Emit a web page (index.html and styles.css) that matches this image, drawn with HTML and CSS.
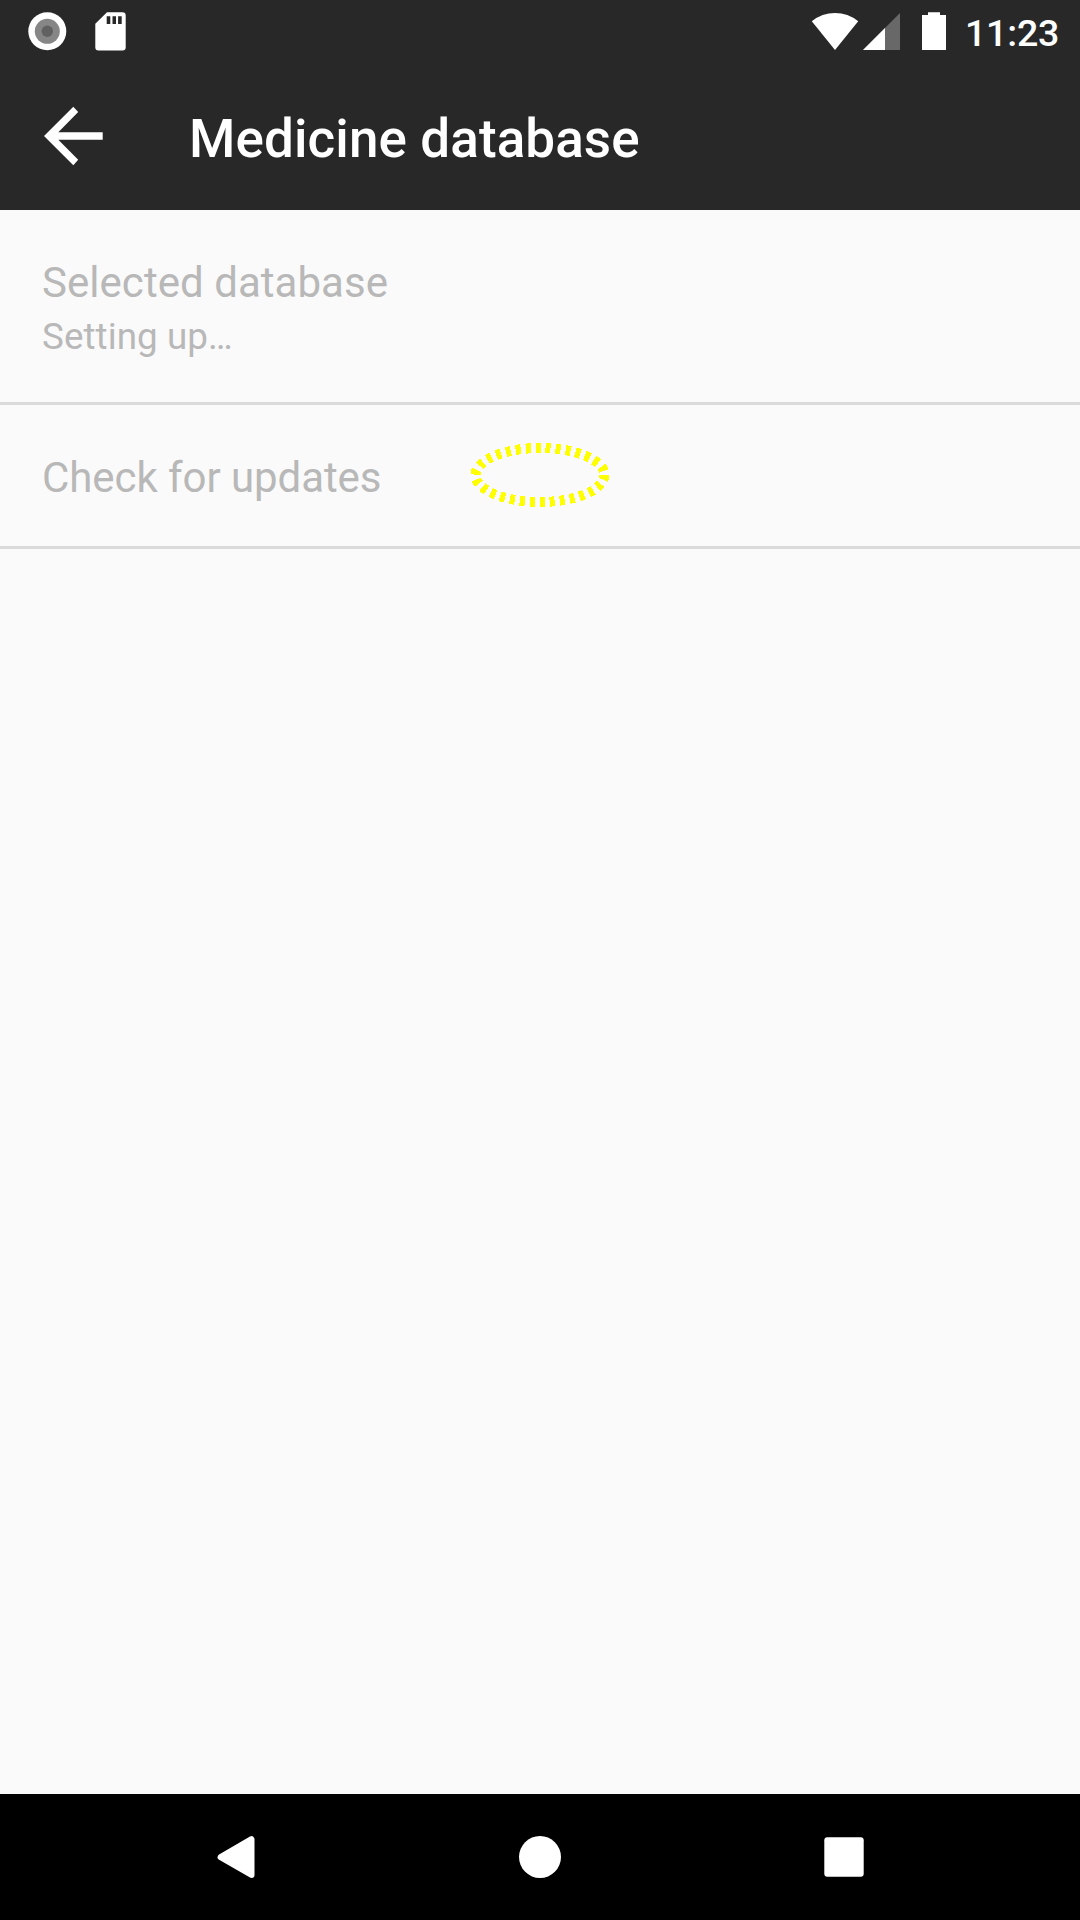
FILE: index.html
```html
<!DOCTYPE html>
<html lang="en">
<head>
<meta charset="utf-8">
<title>Medicine database</title>
<link rel="stylesheet" href="styles.css">
</head>
<body>
<div class="screen">
  <div class="status-bar">
    <svg class="status-icons" width="180" height="63" viewBox="0 0 180 63" aria-hidden="true">
      <circle cx="47.3" cy="31.3" r="19" fill="#fff"/>
      <circle cx="47.3" cy="31.3" r="12.5" fill="#868686"/>
      <circle cx="47.3" cy="31.3" r="5.7" fill="#616161"/>
      <path fill="#fff" fill-rule="evenodd" d="M107 12.3H122.5Q125.7 12.3 125.7 15.5V47.5Q125.7 50.5 122.5 50.5H98.5Q95.3 50.5 95.3 47.5V23.7ZM106.7 16.2V24H110.3V16.2ZM112.5 16.2V24H116V16.2ZM118.1 16.2V24H121.7V16.2Z"/>
    </svg>
    <div class="status-right">
      <svg width="150" height="63" viewBox="800 0 150 63" aria-hidden="true">
        <path fill="#fff" d="M811.8 21.2Q822 13 835 13T858.2 21.2L835 50Z"/>
        <path fill="#686868" d="M900 13V50H863Z"/>
        <path fill="#fff" d="M885 28V50H863Z"/>
        <path fill="#fff" d="M928 12.2H940V15H946V50H922V15H928Z"/>
      </svg>
      <span class="clock">11:23</span>
    </div>
  </div>
  <header class="app-bar">
    <svg class="back" width="59" height="60" viewBox="0 -0.5 59 60" aria-label="Back">
      <path fill="#fff" d="M58.7 25.8V33.3H14.3L34.2 53.2L29.3 58.8L0 29.5L29.3.2L34.2 5.5L14.3 25.8Z"/>
    </svg>
    <h1 class="title">Medicine database</h1>
  </header>
  <main class="content">
    <div class="row row-tall">
      <div class="label">Selected database</div>
      <div class="summary">Setting up…</div>
    </div>
    <div class="row row-short">
      <div class="label label-tight">Check for updates</div>
      <svg class="highlight" width="140" height="66" viewBox="0 0 140 66" shape-rendering="crispEdges" aria-hidden="true">
        <ellipse cx="70" cy="33" rx="64.5" ry="27" fill="none" stroke="#ff0" stroke-width="10" stroke-dasharray="5 5"/>
      </svg>
    </div>
  </main>
  <nav class="nav-bar">
    <svg width="1080" height="126" viewBox="0 0 1080 126" aria-hidden="true">
      <path fill="#fff" stroke="#fff" stroke-width="6" stroke-linejoin="round" d="M220.6 63.2L251.5 45.2V81Z"/>
      <circle cx="540" cy="63" r="21" fill="#fff"/>
      <rect x="824.3" y="43.3" width="39.4" height="39.4" rx="3" fill="#fff"/>
    </svg>
  </nav>
</div>
</body>
</html>
```
FILE: styles.css
```css
body {
  margin: 0;
  font-family: Roboto, "Noto Sans", sans-serif;
  background: #fafafa;
}

svg {
  display: block;
}

.screen {
  display: flex;
  flex-direction: column;
  height: 1920px;
  overflow: hidden;
}

.status-bar {
  display: flex;
  justify-content: space-between;
  height: 63px;
  background: #282828;
}

.status-right {
  display: flex;
  width: 280px;
}

.clock {
  margin-left: 15px;
  padding-top: 11px;
  color: #fff;
  font-size: 37.5px;
  font-weight: 500;
  letter-spacing: -0.2px;
  line-height: 44px;
}

.app-bar {
  display: flex;
  align-items: flex-start;
  box-sizing: border-box;
  height: 147px;
  padding: 43px 0 0 44px;
  background: #282828;
}

.title {
  margin: 2px 0 0 86px;
  color: #fff;
  font-size: 53px;
  font-weight: 500;
  letter-spacing: 0.1px;
  line-height: 62px;
  white-space: nowrap;
}

.content {
  flex: 1;
}

.row {
  position: relative;
  box-sizing: border-box;
  padding: 48px 42px 0;
  border-bottom: 3px solid #dadada;
  color: #b8b8b8;
}

.row-tall {
  height: 195px;
}

.row-short {
  height: 144px;
}

.label {
  font-size: 42px;
  letter-spacing: 0.04px;
  line-height: 49px;
}

.label-tight {
  letter-spacing: -0.07px;
}

.summary {
  margin-top: 8px;
  font-size: 36.75px;
  letter-spacing: 0.08px;
  line-height: 43px;
}

.highlight {
  position: absolute;
  left: 470px;
  top: 37px;
}

.nav-bar {
  height: 126px;
  background: #000;
}
```
